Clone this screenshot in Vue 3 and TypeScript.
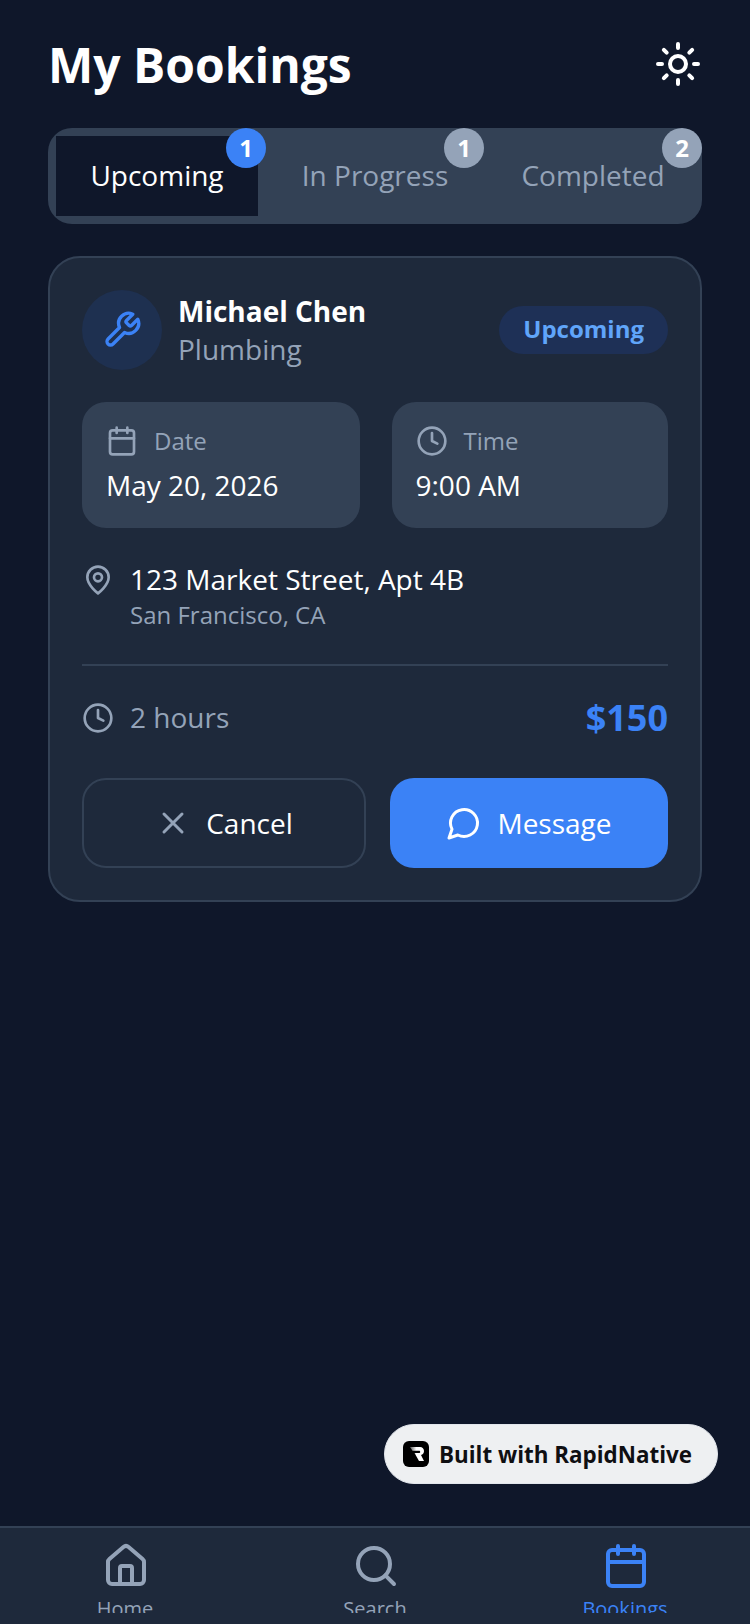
<script setup lang="ts">
import { ref } from "vue";

type TabItem = { label: string; count: number };
type NavItem = { label: string; icon: string };

const activeTab = ref("Upcoming");
const tabs: TabItem[] = [
  { label: "Upcoming", count: 1 },
  { label: "In Progress", count: 1 },
  { label: "Completed", count: 2 },
];
const navItems: NavItem[] = [
  { label: "Home", icon: "home" },
  { label: "Search", icon: "search" },
  { label: "Bookings", icon: "calendar" },
];
</script>

<template>
  <div class="screen">
    <main class="content">
      <header class="header">
        <h1 class="title">My Bookings</h1>
        <svg class="icon sun" viewBox="0 0 24 24">
          <circle cx="12" cy="12" r="4" />
          <path d="M12 2v2M12 20v2M4.93 4.93l1.41 1.41M17.66 17.66l1.41 1.41M2 12h2M20 12h2M6.34 17.66l-1.41 1.41M19.07 4.93l-1.41 1.41" />
        </svg>
      </header>

      <div class="tabs">
        <div
          v-for="tab in tabs"
          :key="tab.label"
          class="tab"
          :class="{ active: tab.label === activeTab }"
          @click="activeTab = tab.label"
        >
          <span>{{ tab.label }}</span>
          <span class="count">{{ tab.count }}</span>
        </div>
      </div>

      <section class="card">
        <div class="card-top">
          <div class="avatar">
            <svg class="icon wrench" viewBox="0 0 24 24">
              <path d="M14.7 6.3a1 1 0 0 0 0 1.4l1.6 1.6a1 1 0 0 0 1.4 0l3.77-3.77a6 6 0 0 1-7.94 7.94l-6.91 6.91a2.12 2.12 0 0 1-3-3l6.91-6.91a6 6 0 0 1 7.94-7.94l-3.76 3.76z" />
            </svg>
          </div>
          <div class="who">
            <div class="name">Michael Chen</div>
            <div class="service">Plumbing</div>
          </div>
          <div class="status">Upcoming</div>
        </div>

        <div class="slots">
          <div class="slot">
            <div class="slot-label">
              <svg class="icon small" viewBox="0 0 24 24">
                <path d="M8 2v4M16 2v4M3 10h18" />
                <rect x="3" y="4" width="18" height="18" rx="2" />
              </svg>
              <span>Date</span>
            </div>
            <div class="slot-value">May 20, 2026</div>
          </div>
          <div class="slot">
            <div class="slot-label">
              <svg class="icon small" viewBox="0 0 24 24">
                <circle cx="12" cy="12" r="10" />
                <path d="M12 6v6l4 2" />
              </svg>
              <span>Time</span>
            </div>
            <div class="slot-value">9:00 AM</div>
          </div>
        </div>

        <div class="address">
          <svg class="icon small pin" viewBox="0 0 24 24">
            <path d="M20 10c0 6-8 12-8 12s-8-6-8-12a8 8 0 0 1 16 0Z" />
            <circle cx="12" cy="10" r="3" />
          </svg>
          <div>
            <div class="street">123 Market Street, Apt 4B</div>
            <div class="city">San Francisco, CA</div>
          </div>
        </div>

        <div class="summary">
          <div class="duration">
            <svg class="icon small" viewBox="0 0 24 24">
              <circle cx="12" cy="12" r="10" />
              <path d="M12 6v6l4 2" />
            </svg>
            <span class="duration-text">2 hours</span>
          </div>
          <div class="price">$150</div>
        </div>

        <div class="actions">
          <button class="btn cancel" type="button">
            <svg class="icon btn-icon x" viewBox="0 0 24 24">
              <path d="M18 6 6 18M6 6l12 12" />
            </svg>
            Cancel
          </button>
          <button class="btn message" type="button">
            <svg class="icon btn-icon" viewBox="0 0 24 24">
              <path d="M7.9 20A9 9 0 1 0 4 16.1L2 22Z" />
            </svg>
            Message
          </button>
        </div>
      </section>
    </main>

    <div class="built">
      <svg class="logo" viewBox="0 0 26 26">
        <defs>
          <linearGradient id="r-fade" x1="0" y1="0" x2="1" y2="0">
            <stop offset="0" stop-color="#555" />
            <stop offset="0.45" stop-color="#fff" />
          </linearGradient>
        </defs>
        <rect width="26" height="26" rx="6" fill="#000" />
        <path d="M7 6h10c2.500 0 4 1.700 4 4s-1.300 3.600-3 4l3 6h-5l-4.500-8H16c.8 0 1.200-.4 1.200-1.100S16.800 9.800 16 9.800H9.500z" fill="url(#r-fade)" />
      </svg>
      <span>Built with RapidNative</span>
    </div>

    <nav class="nav">
      <div
        v-for="item in navItems"
        :key="item.label"
        class="nav-item"
        :class="{ current: item.label === 'Bookings' }"
      >
        <svg class="icon nav-icon" viewBox="0 0 24 24">
          <template v-if="item.icon === 'home'">
            <path d="M15 21v-8a1 1 0 0 0-1-1h-4a1 1 0 0 0-1 1v8" />
            <path d="M3 10a2 2 0 0 1 .709-1.528l7-5.999a2 2 0 0 1 2.582 0l7 5.999A2 2 0 0 1 21 10v9a2 2 0 0 1-2 2H5a2 2 0 0 1-2-2z" />
          </template>
          <template v-else-if="item.icon === 'search'">
            <circle cx="11" cy="11" r="8" />
            <path d="m21 21-4.300-4.300" />
          </template>
          <template v-else>
            <path d="M8 2v4M16 2v4M3 10h18" />
            <rect x="3" y="4" width="18" height="18" rx="2" />
          </template>
        </svg>
        <div class="nav-label"><span>{{ item.label }}</span></div>
      </div>
    </nav>
  </div>
</template>

<style>
html,
body {
  margin: 0;
  background: #0f172a;
}
</style>

<style scoped>
.screen {
  position: relative;
  display: flex;
  flex-direction: column;
  width: 750px;
  height: 1624px;
  overflow: hidden;
  background: #0f172a;
  color: #fff;
  font-family: "Open Sans", "Noto Sans", sans-serif;
}

.content {
  flex: 1;
  padding: 32px 48px 0;
}

.icon {
  flex: none;
  fill: none;
  stroke: currentColor;
  stroke-width: 2;
  stroke-linecap: round;
  stroke-linejoin: round;
}

/* header */
.header {
  display: flex;
  align-items: center;
  justify-content: space-between;
  height: 64px;
  margin-bottom: 32px;
}

.title {
  margin: 2px 0 0;
  font-size: 48px;
  line-height: 64px;
  font-weight: 700;
}

.sun {
  width: 48px;
  height: 48px;
}

/* tabs */
.tabs {
  display: grid;
  grid-template-columns: repeat(3, 1fr);
  gap: 16px;
  padding: 8px;
  border-radius: 24px;
  background: #334155;
}

.tab {
  position: relative;
  display: flex;
  align-items: center;
  justify-content: center;
  height: 80px;
  box-sizing: border-box;
  padding-bottom: 2px;
  font-size: 28px;
  color: #94a3b8;
}

.tab.active {
  background: #0f172a;
  color: #fff;
}

.count {
  position: absolute;
  top: -8px;
  right: -8px;
  width: 40px;
  height: 40px;
  border-radius: 50%;
  background: #94a3b8;
  color: #fff;
  font-size: 24px;
  font-weight: 700;
  line-height: 40px;
  text-align: center;
}

.tab.active .count {
  background: #3b82f6;
}

/* card */
.card {
  margin-top: 32px;
  padding: 32px;
  border: 2px solid #334155;
  border-radius: 32px;
  background: #1e293b;
}

.card-top {
  display: flex;
  align-items: center;
  gap: 16px;
}

.avatar {
  display: flex;
  align-items: center;
  justify-content: center;
  width: 80px;
  height: 80px;
  border-radius: 50%;
  background: #1e3050;
  color: #3b82f6;
}

.wrench {
  width: 40px;
  height: 40px;
}

.who {
  flex: 1;
}

.name {
  font-size: 28px;
  line-height: 38px;
  font-weight: 700;
}

.service {
  font-size: 28px;
  line-height: 38px;
  color: #94a3b8;
}

.status {
  height: 48px;
  box-sizing: border-box;
  padding: 0 24px;
  border-radius: 24px;
  background: #1e3056;
  color: #60a5fa;
  font-size: 24px;
  line-height: 46px;
  font-weight: 700;
}

.slots {
  display: grid;
  grid-template-columns: 277.5px 276.5px;
  gap: 32px;
  margin-top: 32px;
}

.slot {
  height: 126px;
  box-sizing: border-box;
  padding: 23px 24px 0;
  border-radius: 24px;
  background: #334155;
}

.slot-label {
  display: flex;
  align-items: center;
  gap: 16px;
  color: #94a3b8;
  font-size: 24px;
  line-height: 32px;
}

.small {
  width: 32px;
  height: 32px;
  color: #94a3b8;
}

.slot-value {
  margin-top: 9px;
  font-size: 28px;
  line-height: 38px;
}

.address {
  display: flex;
  gap: 16px;
  margin-top: 32px;
  padding-bottom: 33px;
  border-bottom: 2px solid #334155;
}

.pin {
  margin-top: 4px;
}

.street {
  font-size: 28px;
  line-height: 38px;
}

.city {
  margin-top: 1px;
  font-size: 24px;
  line-height: 32px;
  color: #94a3b8;
}

.summary {
  display: flex;
  align-items: center;
  justify-content: space-between;
  margin-top: 28px;
}

.duration {
  display: flex;
  align-items: center;
  gap: 16px;
  font-size: 28px;
  color: #94a3b8;
}

.duration-text {
  padding-bottom: 2px;
}

.price {
  font-size: 36px;
  line-height: 48px;
  font-weight: 700;
  color: #3b82f6;
}

.actions {
  display: grid;
  grid-template-columns: 284px 278px;
  gap: 24px;
  margin-top: 36px;
}

.btn {
  display: flex;
  align-items: center;
  justify-content: center;
  gap: 15px;
  height: 90px;
  border-radius: 24px;
  color: #fff;
  font-family: inherit;
  font-size: 28px;
}

.btn-icon {
  width: 36px;
  height: 36px;
}

.cancel {
  border: 2px solid #334155;
  background: transparent;
}

.x {
  color: #94a3b8;
}

.message {
  border: 0;
  background: #3b82f6;
}

/* badge */
.built {
  position: absolute;
  top: 1424px;
  left: 384px;
  display: flex;
  align-items: center;
  gap: 10px;
  width: 334px;
  height: 60px;
  box-sizing: border-box;
  padding: 0 18px;
  border: 1px solid #e2e6ec;
  border-radius: 30px;
  background: #eef0f2;
  color: #0f0f12;
  font-size: 22.4px;
  font-weight: 700;
}

.logo {
  width: 26px;
  height: 26px;
}

/* bottom nav */
.nav {
  display: grid;
  grid-template-columns: repeat(3, 1fr);
  height: 98px;
  box-sizing: border-box;
  border-top: 2px solid #334155;
  background: #1e293b;
}

.nav-item {
  display: flex;
  flex-direction: column;
  align-items: center;
  padding-top: 14px;
  color: #94a3b8;
}

.nav-item.current {
  color: #3b82f6;
}

.nav-icon {
  width: 48px;
  height: 48px;
  margin-left: 2px;
}

.nav-label {
  height: 18px;
  margin-top: 5px;
  overflow: hidden;
  font-size: 20px;
  line-height: 27px;
}
</style>
